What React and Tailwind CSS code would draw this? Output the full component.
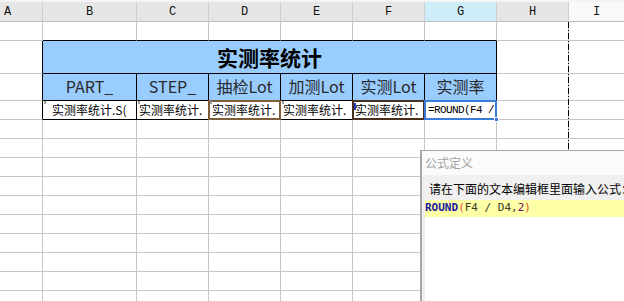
import React from "react";

const cjk = "font-['Noto_Sans_CJK_SC','Noto_Sans',sans-serif]";

function GridRow() {
  return (
    <div className="flex h-[19px]">
      <div className="w-[43px] shrink-0 border-r border-b border-[#c6c6c6]" />
      <div className="w-[94px] shrink-0 border-r border-b border-[#c6c6c6]" />
      <div className="w-[72px] shrink-0 border-r border-b border-[#c6c6c6]" />
      <div className="w-[72px] shrink-0 border-r border-b border-[#c6c6c6]" />
      <div className="w-[72px] shrink-0 border-r border-b border-[#c6c6c6]" />
      <div className="w-[72px] shrink-0 border-r border-b border-[#c6c6c6]" />
      <div className="w-[72px] shrink-0 border-r border-b border-[#c6c6c6]" />
      <div className="w-[72px] shrink-0 border-r border-b border-[#c6c6c6]" />
      <div className="flex-1 border-b border-[#c6c6c6]" />
    </div>
  );
}

function Mark() {
  return <div className="absolute left-[1px] top-0 w-[2px] h-[3px] bg-[#a0a0a0]" />;
}

export default function App() {
  const hdr =
    "shrink-0 flex items-center justify-center border-r border-[#cfcfcf] font-['Liberation_Mono',monospace] text-[12px] text-[#111] pt-[1px]";
  return (
    <div className={`relative w-[624px] h-[301px] overflow-hidden bg-white ${cjk}`}>
      {/* column header */}
      <div className="h-[2px] bg-[#f4f4f4]" />
      <div className="flex h-[20px] border-b border-[#bdbdbd] bg-[#e6e6e6]">
        <div className="w-[43px] shrink-0 flex items-center pl-[4px] border-r border-[#cfcfcf] font-['Liberation_Mono',monospace] text-[12px] text-[#111] pt-[1px]">A</div>
        <div className={`w-[94px] ${hdr}`}>B</div>
        <div className={`w-[72px] ${hdr}`}>C</div>
        <div className={`w-[72px] ${hdr}`}>D</div>
        <div className={`w-[72px] ${hdr}`}>E</div>
        <div className={`w-[72px] ${hdr}`}>F</div>
        <div className={`w-[72px] bg-[#cdeef9] ${hdr}`}>G</div>
        <div className={`w-[72px] ${hdr}`}>H</div>
        <div className="flex-1 flex items-center justify-center bg-[#f9f9f9] font-['Liberation_Mono',monospace] text-[12px] text-[#111] pt-[1px]">I</div>
      </div>

      {/* row 1 */}
      <div className="flex h-[19px]">
        <div className="w-[43px] shrink-0 border-r border-b border-[#c6c6c6]" />
        <div className="w-[94px] shrink-0 border-r border-b border-[#c6c6c6] border-b-black" />
        <div className="w-[72px] shrink-0 border-r border-b border-[#c6c6c6] border-b-black" />
        <div className="w-[72px] shrink-0 border-r border-b border-[#c6c6c6] border-b-black" />
        <div className="w-[72px] shrink-0 border-r border-b border-[#c6c6c6] border-b-black" />
        <div className="w-[72px] shrink-0 border-r border-b border-[#c6c6c6] border-b-black" />
        <div className="w-[72px] shrink-0 border-r border-b border-[#c6c6c6] border-b-black" />
        <div className="w-[72px] shrink-0 border-r border-b border-[#c6c6c6]" />
        <div className="flex-1 border-b border-[#c6c6c6]" />
      </div>

      {/* row 2 : title */}
      <div className="flex h-[33px]">
        <div className="w-[43px] shrink-0 border-r border-b border-[#c6c6c6] border-r-black" />
        <div className="w-[454px] shrink-0 flex items-center justify-center bg-[#99ccff] border-r border-b border-black text-[21px] font-bold text-black pt-[1px]">
          实测率统计
        </div>
        <div className="w-[72px] shrink-0 border-r border-b border-[#c6c6c6]" />
        <div className="flex-1 border-b border-[#c6c6c6]" />
      </div>

      {/* row 3 : headers */}
      <div className="flex h-[27px]">
        <div className="w-[43px] shrink-0 border-r border-b border-[#c6c6c6] border-r-black" />
        {[
          ["PART_", "w-[94px]"],
          ["STEP_", "w-[72px]"],
          ["抽检Lot", "w-[72px]"],
          ["加测Lot", "w-[72px]"],
          ["实测Lot", "w-[72px]"],
          ["实测率", "w-[72px]"],
        ].map(([t, w]) => (
          <div
            key={t}
            className={`${w} shrink-0 flex justify-center bg-[#99ccff] border-r border-b border-black text-[16px] leading-[22px] text-[#2a2a2a] pt-[1px] whitespace-nowrap overflow-hidden`}
          >
            {t}
          </div>
        ))}
        <div className="w-[72px] shrink-0 border-r border-b border-[#c6c6c6]" />
        <div className="flex-1 border-b border-[#c6c6c6]" />
      </div>

      {/* row 4 : data */}
      <div className="flex h-[19px] text-[12px] leading-[18px] text-black">
        <div className="w-[43px] shrink-0 border-r border-b border-[#c6c6c6] border-r-black" />
        <div className="relative w-[94px] shrink-0 border-r border-b border-black pl-[9px] whitespace-nowrap overflow-hidden">
          <Mark />
          实测率统计.S(
        </div>
        <div className="relative w-[72px] shrink-0 border-r border-b border-black pl-[2px] whitespace-nowrap overflow-hidden">
          <Mark />
          实测率统计.
        </div>
        <div className="relative w-[72px] shrink-0 border-r border-b border-black pl-[3px] whitespace-nowrap">
          <div className="absolute -left-px -top-px -right-px -bottom-px border-2 border-[#7f5c3a]" />
          <Mark />
          实测率统计.
        </div>
        <div className="relative w-[72px] shrink-0 border-r border-b border-black pl-[2px] whitespace-nowrap overflow-hidden">
          <Mark />
          实测率统计.
        </div>
        <div className="relative w-[72px] shrink-0 border-r border-b border-black pl-[2px] whitespace-nowrap">
          <div className="absolute -left-px -top-px -right-px -bottom-px border-2 border-[#4a2f1c]" />
          <div className="absolute left-[1px] top-[2px] w-[2px] h-[7px] bg-[#2040c0]" />
          实测率统计.
        </div>
        <div className="relative w-[72px] shrink-0 border-r border-b border-black pl-[3px] whitespace-nowrap overflow-visible font-['Liberation_Mono',monospace] text-[11px] tracking-[-0.6px]">
          <div className="absolute -left-px -top-px -right-px -bottom-px border-2 border-[#3a7ad8]" />
          <div className="absolute -right-[3px] -bottom-[3px] w-[5px] h-[5px] bg-[#3a7ad8] border border-white" />
          =ROUND(F4 /
        </div>
        <div className="w-[72px] shrink-0 border-r border-b border-[#c6c6c6]" />
        <div className="flex-1 border-b border-[#c6c6c6]" />
      </div>

      {Array.from({ length: 10 }).map((_, i) => (
        <GridRow key={i} />
      ))}

      {/* page break line */}
      <div className="absolute left-[568px] top-[22px] bottom-0 w-px bg-[repeating-linear-gradient(to_bottom,#000_0px,#000_6px,transparent_6px,transparent_8px,#000_8px,#000_9px,transparent_9px,transparent_11px)]" />

      {/* formula dialog */}
      <div className="absolute left-[420px] top-[150px] right-0 bottom-0 flex flex-col border-l-2 border-t border-[#a6a6a6] bg-[#f0f0f0]">
        <div className="h-[24px] shrink-0 flex items-center pl-[3px] bg-[#fbfbfb] text-[12px] text-[#a3a3a3]">
          公式定义
        </div>
        <div className="h-[25px] shrink-0 flex items-center pl-[7px] pt-[2px] text-[12px] text-black whitespace-nowrap overflow-hidden">
          请在下面的文本编辑框里面输入公式：
        </div>
        <div className="flex-1 ml-[3px] bg-white">
          <div className="h-[17px] bg-[#ffffa8] flex items-center font-['DejaVu_Sans_Mono',monospace] text-[11px] whitespace-pre">
            <span className="text-[#1a1a9c] font-bold">ROUND</span>
            <span className="text-[#e0501e]">(</span>
            <span className="text-[#3a3a2a]">F4 / D4,</span>
            <span className="text-[#6a1060]">2</span>
            <span className="text-[#e0501e]">)</span>
          </div>
        </div>
      </div>
    </div>
  );
}
